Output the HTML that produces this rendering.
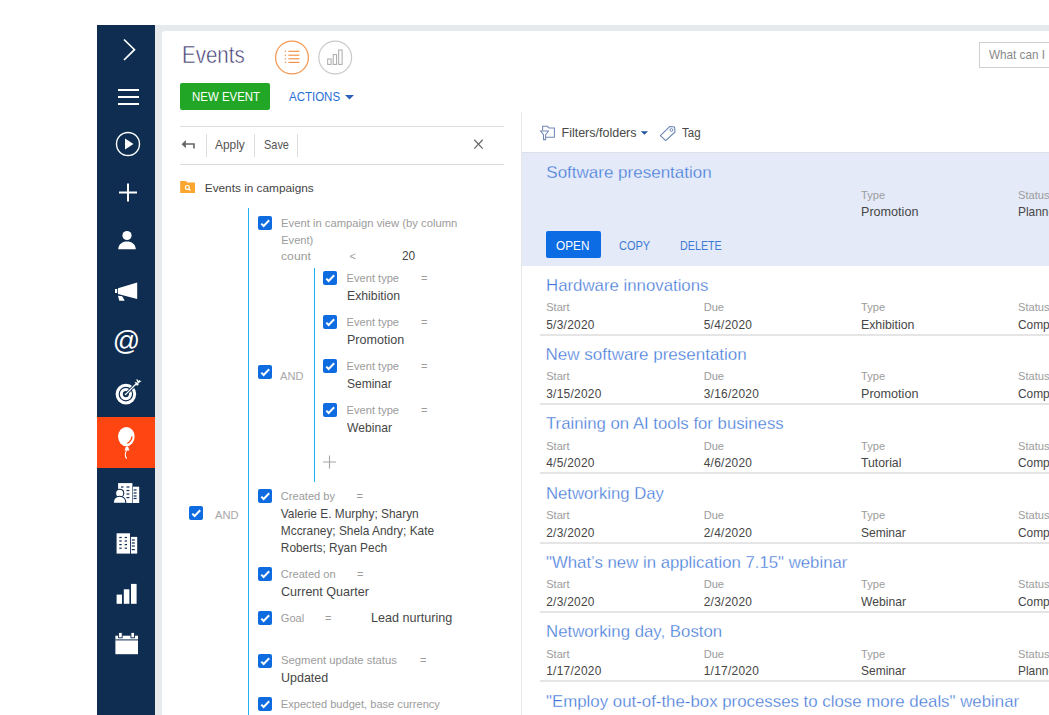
<!DOCTYPE html>
<html><head><meta charset="utf-8"><title>Events</title>
<style>
html,body{margin:0;padding:0;width:1049px;height:715px;overflow:hidden;background:#fff;position:relative}
.t{position:absolute;white-space:nowrap;font-family:"Liberation Sans", sans-serif}
</style></head><body>
<div style="position:absolute;left:97px;top:25px;width:58px;height:690px;background:#0F2D50"></div><div style="position:absolute;left:97px;top:417px;width:58px;height:51px;background:#FF4512"></div><div style="position:absolute;left:155px;top:25px;width:894px;height:690px;background:#E7EAEC"></div><div style="position:absolute;left:162px;top:31px;width:887px;height:684px;background:#fff;border-top-left-radius:3px"></div><svg style="position:absolute;left:0;top:0" width="1049" height="715"><polyline points="124,39.5 134.5,49.7 124,60" fill="none" stroke="#fff" stroke-width="1.7"/><rect x="118" y="89" width="21" height="2" fill="#fff"/><rect x="118" y="96" width="21" height="2" fill="#fff"/><rect x="118" y="103" width="21" height="2" fill="#fff"/><circle cx="128" cy="144" r="11.5" fill="none" stroke="#fff" stroke-width="1.4"/><polygon points="125,138.5 125,149.5 133.5,144" fill="#fff"/><rect x="119" y="191.5" width="18" height="2" fill="#fff"/><rect x="127" y="183.5" width="2" height="18" fill="#fff"/><circle cx="127" cy="235.5" r="4.6" fill="#fff"/><path d="M118.2,249.3 C118.5,244 122.5,241.5 127,241.5 C131.5,241.5 135.5,244 135.8,249.3 Z" fill="#fff"/><path d="M118,288.2 L137.2,282.4 L137.2,299 L118,293.9 Z" fill="#fff"/><path d="M115,289 L117.2,289 L117.2,293 L115,293 Z" fill="#fff"/><path d="M118,295.8 L122.2,296.3 L124.7,300.8 L119.3,300.8 Z" fill="#fff"/><text x="126.5" y="350" font-family="Liberation Sans" font-size="27" fill="#fff" text-anchor="middle">@</text><circle cx="125.9" cy="394.1" r="8.8" fill="none" stroke="#fff" stroke-width="3"/><circle cx="125.9" cy="394.1" r="4.6" fill="none" stroke="#fff" stroke-width="3"/><circle cx="125.9" cy="394.1" r="1.2" fill="#fff"/><line x1="125.9" y1="394.1" x2="137" y2="383" stroke="#0F2D50" stroke-width="3"/><line x1="125.9" y1="394.1" x2="137.5" y2="382.5" stroke="#fff" stroke-width="1.3"/><path d="M134.5,381.5 L137,386 L139,384 Z M136,379.5 L140.5,381.5 L138.5,383.5 Z" fill="#fff"/><path d="M137,379.3 L138,382 M139,380.5 L141.2,381.6" stroke="#fff" stroke-width="0.9"/><ellipse cx="126.35" cy="436.6" rx="8.3" ry="9.6" fill="#fff"/><path d="M124.4,450.6 L125.8,447.2 L127,446 L128.2,447.2 L129.6,450.6 Z" fill="#fff"/><path d="M126.8,450.5 C125,452.5 124.2,454.5 126.6,458.8" fill="none" stroke="#fff" stroke-width="1.1"/><path d="M132,436.5 C131.6,439.8 130,442 127.4,443.3" fill="none" stroke="#FF4512" stroke-width="1.4"/><rect x="118.1" y="483.1" width="14.3" height="19.9" fill="#fff"/><rect x="133" y="486.7" width="6.2" height="16.3" fill="#fff"/><rect x="121" y="486.4" width="2.5" height="1.2" fill="#0F2D50"/><rect x="126.5" y="486.4" width="2.9" height="1.2" fill="#0F2D50"/><rect x="121" y="489.9" width="2.5" height="1.2" fill="#0F2D50"/><rect x="126.5" y="489.9" width="2.9" height="1.2" fill="#0F2D50"/><rect x="121" y="493.4" width="2.5" height="1.2" fill="#0F2D50"/><rect x="126.5" y="493.4" width="2.9" height="1.2" fill="#0F2D50"/><rect x="121" y="497.0" width="2.5" height="1.2" fill="#0F2D50"/><rect x="126.5" y="497.0" width="2.9" height="1.2" fill="#0F2D50"/><rect x="133.6" y="489.4" width="3" height="1.2" fill="#0F2D50"/><rect x="133.6" y="492.4" width="3" height="1.2" fill="#0F2D50"/><rect x="133.6" y="495.4" width="3" height="1.2" fill="#0F2D50"/><rect x="133.6" y="497.9" width="3" height="1.2" fill="#0F2D50"/><circle cx="119.7" cy="493.3" r="4.1" fill="#fff" stroke="#0F2D50" stroke-width="1.1"/><path d="M113.2,503.4 C113.2,499 116,496.3 119.6,496.3 C123.2,496.3 126,499 126,503.4 Z" fill="#fff" stroke="#0F2D50" stroke-width="1.1"/><rect x="116.6" y="533.3" width="13.4" height="20.3" fill="#fff"/><rect x="130.9" y="536.9" width="6.3" height="16.7" fill="#fff"/><rect x="119.3" y="536.9" width="2.4" height="1.2" fill="#0F2D50"/><rect x="124.7" y="536.9" width="2.3" height="1.2" fill="#0F2D50"/><rect x="119.3" y="540.4" width="2.4" height="1.2" fill="#0F2D50"/><rect x="124.7" y="540.4" width="2.3" height="1.2" fill="#0F2D50"/><rect x="119.3" y="544.0" width="2.4" height="1.2" fill="#0F2D50"/><rect x="124.7" y="544.0" width="2.3" height="1.2" fill="#0F2D50"/><rect x="119.3" y="547.6" width="2.4" height="1.2" fill="#0F2D50"/><rect x="124.7" y="547.6" width="2.3" height="1.2" fill="#0F2D50"/><rect x="131.8" y="539.4" width="3" height="1.2" fill="#0F2D50"/><rect x="131.8" y="542.4" width="3" height="1.2" fill="#0F2D50"/><rect x="131.8" y="545.4" width="3" height="1.2" fill="#0F2D50"/><rect x="131.8" y="549.0" width="3" height="1.2" fill="#0F2D50"/><rect x="116.6" y="594.6" width="5.4" height="9.2" fill="#fff"/><rect x="123.8" y="589.3" width="5.6" height="14.5" fill="#fff"/><rect x="131" y="583.9" width="5.6" height="19.9" fill="#fff"/><rect x="115.4" y="635.7" width="22.6" height="18.5" fill="#fff"/><rect x="115.4" y="639.4" width="22.6" height="1" fill="#0F2D50"/><rect x="118.6" y="632.4" width="3.6" height="5.4" fill="#fff" stroke="#0F2D50" stroke-width="0.9"/><rect x="130.9" y="632.4" width="3.6" height="5.4" fill="#fff" stroke="#0F2D50" stroke-width="0.9"/><circle cx="292" cy="57.5" r="16.4" fill="none" stroke="#F39A55" stroke-width="1.3"/><rect x="284.8" y="50.75" width="1.3" height="1.1" fill="#F08A3C"/><rect x="288.4" y="50.75" width="11" height="1.1" fill="#F08A3C"/><rect x="284.8" y="54.650000000000006" width="1.3" height="1.1" fill="#F08A3C"/><rect x="288.4" y="54.650000000000006" width="11" height="1.1" fill="#F08A3C"/><rect x="284.8" y="58.25" width="1.3" height="1.1" fill="#F08A3C"/><rect x="288.4" y="58.25" width="11" height="1.1" fill="#F08A3C"/><rect x="284.8" y="61.85" width="1.3" height="1.1" fill="#F08A3C"/><rect x="288.4" y="61.85" width="11" height="1.1" fill="#F08A3C"/><circle cx="335.2" cy="57.5" r="16.4" fill="none" stroke="#C9C9C9" stroke-width="1.2"/><rect x="327.7" y="59" width="3.4" height="5.4" fill="none" stroke="#A8A8A8" stroke-width="1"/><rect x="333.2" y="54.6" width="3.4" height="9.8" fill="none" stroke="#A8A8A8" stroke-width="1"/><rect x="338.7" y="50" width="3.4" height="14.4" fill="none" stroke="#A8A8A8" stroke-width="1"/></svg><div class="t" style="left:181.8px;top:40.86px;font-size:23.2px;line-height:29px;color:#3F3C70;transform:scaleX(0.885);transform-origin:0 0;-webkit-text-stroke:0.5px #fff">Events</div>
<div style="position:absolute;left:180px;top:83px;width:90px;height:27px;background:#22A626;border-radius:2px"></div><div class="t" style="left:191.6px;top:88.86px;font-size:13.1px;line-height:16px;color:#fff;transform:scaleX(0.874);transform-origin:0 0;">NEW EVENT</div>
<div class="t" style="left:289px;top:88.86px;font-size:13.1px;line-height:16px;color:#1F6ED6;transform:scaleX(0.877);transform-origin:0 0;">ACTIONS</div>
<svg style="position:absolute;left:0;top:0" width="1049" height="715"><polygon points="345,95 354,95 349.5,99.5" fill="#2B62B8"/></svg><div style="position:absolute;left:979px;top:42px;width:90px;height:24px;border:1px solid #CFCFCF;background:#fff"></div><div class="t" style="left:989px;top:46.89px;font-size:13px;line-height:16px;color:#8A8A8A;transform:scaleX(0.9);transform-origin:0 0;">What can I</div>
<div style="position:absolute;left:180px;top:126px;width:324px;height:1px;background:#DCDCDC"></div><div style="position:absolute;left:180px;top:163.5px;width:324px;height:1px;background:#DCDCDC"></div><div style="position:absolute;left:206px;top:134px;width:1px;height:23px;background:#DEDEDE"></div><div style="position:absolute;left:254px;top:134px;width:1px;height:23px;background:#DEDEDE"></div><div style="position:absolute;left:297px;top:134px;width:1px;height:23px;background:#DEDEDE"></div><div class="t" style="left:215px;top:137.67px;font-size:11.9px;line-height:15px;color:#555;">Apply</div>
<div class="t" style="left:263.7px;top:137.67px;font-size:11.9px;line-height:15px;color:#555;transform:scaleX(0.92);transform-origin:0 0;">Save</div>
<svg style="position:absolute;left:0;top:0" width="1049" height="715"><path d="M185,144 L194,144 L194,148.4" fill="none" stroke="#666" stroke-width="1.6"/><polygon points="181.6,144.2 185.9,140.1 185.9,148.3" fill="#666"/><path d="M474.3,139.7 L482.7,148.6 M482.7,139.7 L474.3,148.6" stroke="#6A6A6A" stroke-width="1.25"/><path d="M180.2,181 L185.8,181 L187.3,182.6 L195,182.6 L195,193 L180.2,193 Z" fill="#FCA632"/><circle cx="187.3" cy="187.4" r="1.9" fill="none" stroke="#fff" stroke-width="1.2"/><line x1="188.7" y1="188.8" x2="190.4" y2="190.5" stroke="#fff" stroke-width="1.2"/></svg><div class="t" style="left:204.8px;top:180.61px;font-size:11.8px;line-height:15px;color:#444;">Events in campaigns</div>
<div style="position:absolute;left:248px;top:208px;width:1px;height:507px;background:#1FB0F0"></div><div style="position:absolute;left:314px;top:268px;width:1px;height:214px;background:#1FB0F0"></div><div style="position:absolute;left:258px;top:216px;width:14px;height:14px;background:#0E6BE0;border-radius:2px"><svg width="14" height="14" style="position:absolute;left:0;top:0"><polyline points="3.3,7.6 5.6,10 11.2,4.3" fill="none" stroke="#fff" stroke-width="2"/></svg></div><div class="t" style="left:281.2px;top:216.05px;font-size:11.1px;line-height:14px;color:#9C9C9C;transform:scaleX(1.014);transform-origin:0 0;">Event in campaign view (by column</div>
<div class="t" style="left:281.2px;top:232.55px;font-size:11.1px;line-height:14px;color:#9C9C9C;">Event)</div>
<div class="t" style="left:281.2px;top:249.05px;font-size:11.1px;line-height:14px;color:#9C9C9C;transform:scaleX(1.1);transform-origin:0 0;">count</div>
<div class="t" style="left:349.5px;top:249.05px;font-size:11.1px;line-height:14px;color:#9C9C9C;">&lt;</div>
<div class="t" style="left:402px;top:248.97px;font-size:11.9px;line-height:15px;color:#464646;">20</div>
<div style="position:absolute;left:323px;top:271px;width:14px;height:14px;background:#0E6BE0;border-radius:2px"><svg width="14" height="14" style="position:absolute;left:0;top:0"><polyline points="3.3,7.6 5.6,10 11.2,4.3" fill="none" stroke="#fff" stroke-width="2"/></svg></div><div class="t" style="left:346.6px;top:270.65px;font-size:11.1px;line-height:14px;color:#9C9C9C;">Event type</div>
<div class="t" style="left:421px;top:270.65px;font-size:11.1px;line-height:14px;color:#9C9C9C;">=</div>
<div class="t" style="left:346.6px;top:289.37px;font-size:11.9px;line-height:15px;color:#464646;transform:scaleX(1.03);transform-origin:0 0;">Exhibition</div>
<div style="position:absolute;left:323px;top:315px;width:14px;height:14px;background:#0E6BE0;border-radius:2px"><svg width="14" height="14" style="position:absolute;left:0;top:0"><polyline points="3.3,7.6 5.6,10 11.2,4.3" fill="none" stroke="#fff" stroke-width="2"/></svg></div><div class="t" style="left:346.6px;top:314.65px;font-size:11.1px;line-height:14px;color:#9C9C9C;">Event type</div>
<div class="t" style="left:421px;top:314.65px;font-size:11.1px;line-height:14px;color:#9C9C9C;">=</div>
<div class="t" style="left:346.6px;top:333.37px;font-size:11.9px;line-height:15px;color:#464646;transform:scaleX(1.055);transform-origin:0 0;">Promotion</div>
<div style="position:absolute;left:323px;top:359px;width:14px;height:14px;background:#0E6BE0;border-radius:2px"><svg width="14" height="14" style="position:absolute;left:0;top:0"><polyline points="3.3,7.6 5.6,10 11.2,4.3" fill="none" stroke="#fff" stroke-width="2"/></svg></div><div class="t" style="left:346.6px;top:358.65px;font-size:11.1px;line-height:14px;color:#9C9C9C;">Event type</div>
<div class="t" style="left:421px;top:358.65px;font-size:11.1px;line-height:14px;color:#9C9C9C;">=</div>
<div class="t" style="left:346.6px;top:377.37px;font-size:11.9px;line-height:15px;color:#464646;transform:scaleX(1.01);transform-origin:0 0;">Seminar</div>
<div style="position:absolute;left:323px;top:403px;width:14px;height:14px;background:#0E6BE0;border-radius:2px"><svg width="14" height="14" style="position:absolute;left:0;top:0"><polyline points="3.3,7.6 5.6,10 11.2,4.3" fill="none" stroke="#fff" stroke-width="2"/></svg></div><div class="t" style="left:346.6px;top:402.65px;font-size:11.1px;line-height:14px;color:#9C9C9C;">Event type</div>
<div class="t" style="left:421px;top:402.65px;font-size:11.1px;line-height:14px;color:#9C9C9C;">=</div>
<div class="t" style="left:346.6px;top:421.37px;font-size:11.9px;line-height:15px;color:#464646;transform:scaleX(1.02);transform-origin:0 0;">Webinar</div>
<div style="position:absolute;left:258px;top:365px;width:14px;height:14px;background:#0E6BE0;border-radius:2px"><svg width="14" height="14" style="position:absolute;left:0;top:0"><polyline points="3.3,7.6 5.6,10 11.2,4.3" fill="none" stroke="#fff" stroke-width="2"/></svg></div><div class="t" style="left:280px;top:368.65px;font-size:11.1px;line-height:14px;color:#A8A8A8;">AND</div>
<svg style="position:absolute;left:0;top:0" width="1049" height="715"><path d="M323,462 L336,462 M329.5,455.5 L329.5,468.5" stroke="#A5A5A5" stroke-width="1.1"/></svg><div style="position:absolute;left:189px;top:506px;width:14px;height:14px;background:#0E6BE0;border-radius:2px"><svg width="14" height="14" style="position:absolute;left:0;top:0"><polyline points="3.3,7.6 5.6,10 11.2,4.3" fill="none" stroke="#fff" stroke-width="2"/></svg></div><div class="t" style="left:215px;top:508.15px;font-size:11.1px;line-height:14px;color:#A8A8A8;">AND</div>
<div style="position:absolute;left:258px;top:489px;width:14px;height:14px;background:#0E6BE0;border-radius:2px"><svg width="14" height="14" style="position:absolute;left:0;top:0"><polyline points="3.3,7.6 5.6,10 11.2,4.3" fill="none" stroke="#fff" stroke-width="2"/></svg></div><div class="t" style="left:280.8px;top:488.85px;font-size:11.1px;line-height:14px;color:#9C9C9C;">Created by</div>
<div class="t" style="left:356.6px;top:488.85px;font-size:11.1px;line-height:14px;color:#9C9C9C;">=</div>
<div class="t" style="left:280.8px;top:506.87px;font-size:11.9px;line-height:15px;color:#464646;">Valerie E. Murphy; Sharyn</div>
<div class="t" style="left:280.8px;top:524.17px;font-size:11.9px;line-height:15px;color:#464646;">Mccraney; Shela Andry; Kate</div>
<div class="t" style="left:280.8px;top:541.37px;font-size:11.9px;line-height:15px;color:#464646;">Roberts; Ryan Pech</div>
<div style="position:absolute;left:258px;top:567px;width:14px;height:14px;background:#0E6BE0;border-radius:2px"><svg width="14" height="14" style="position:absolute;left:0;top:0"><polyline points="3.3,7.6 5.6,10 11.2,4.3" fill="none" stroke="#fff" stroke-width="2"/></svg></div><div class="t" style="left:280.8px;top:567.15px;font-size:11.1px;line-height:14px;color:#9C9C9C;">Created on</div>
<div class="t" style="left:357px;top:567.15px;font-size:11.1px;line-height:14px;color:#9C9C9C;">=</div>
<div class="t" style="left:280.5px;top:584.87px;font-size:11.9px;line-height:15px;color:#464646;transform:scaleX(1.055);transform-origin:0 0;">Current Quarter</div>
<div style="position:absolute;left:258px;top:611px;width:14px;height:14px;background:#0E6BE0;border-radius:2px"><svg width="14" height="14" style="position:absolute;left:0;top:0"><polyline points="3.3,7.6 5.6,10 11.2,4.3" fill="none" stroke="#fff" stroke-width="2"/></svg></div><div class="t" style="left:280.8px;top:610.85px;font-size:11.1px;line-height:14px;color:#9C9C9C;">Goal</div>
<div class="t" style="left:325px;top:610.85px;font-size:11.1px;line-height:14px;color:#9C9C9C;">=</div>
<div class="t" style="left:370.7px;top:611.07px;font-size:11.9px;line-height:15px;color:#464646;transform:scaleX(1.06);transform-origin:0 0;">Lead nurturing</div>
<div style="position:absolute;left:258px;top:654px;width:14px;height:14px;background:#0E6BE0;border-radius:2px"><svg width="14" height="14" style="position:absolute;left:0;top:0"><polyline points="3.3,7.6 5.6,10 11.2,4.3" fill="none" stroke="#fff" stroke-width="2"/></svg></div><div class="t" style="left:280.8px;top:653.15px;font-size:11.1px;line-height:14px;color:#9C9C9C;transform:scaleX(1.015);transform-origin:0 0;">Segment update status</div>
<div class="t" style="left:420px;top:653.15px;font-size:11.1px;line-height:14px;color:#9C9C9C;">=</div>
<div class="t" style="left:280.5px;top:670.67px;font-size:11.9px;line-height:15px;color:#464646;transform:scaleX(1.05);transform-origin:0 0;">Updated</div>
<div style="position:absolute;left:258px;top:697px;width:14px;height:14px;background:#0E6BE0;border-radius:2px"><svg width="14" height="14" style="position:absolute;left:0;top:0"><polyline points="3.3,7.6 5.6,10 11.2,4.3" fill="none" stroke="#fff" stroke-width="2"/></svg></div><div class="t" style="left:280.8px;top:696.85px;font-size:11.1px;line-height:14px;color:#9C9C9C;">Expected budget, base currency</div>
<div style="position:absolute;left:521px;top:112px;width:1px;height:603px;background:#E6E6E6"></div><div style="position:absolute;left:522px;top:152px;width:527px;height:113px;background:#E4EAF8;border-top:1px solid #DCE0E8"></div><svg style="position:absolute;left:0;top:0" width="1049" height="715"><path d="M542.6,130.6 L542.6,126.3 L547.4,126.3 L548.9,127.9 L554.4,127.9 L554.4,137.2 L545.8,137.2" fill="none" stroke="#7189B5" stroke-width="1.05"/><path d="M540.6,131 L548.4,131 L545.6,134.8 L545.6,139.6 L543.5,139.6 L543.5,134.8 Z" fill="#fff" stroke="#7189B5" stroke-width="1.05"/><polygon points="640.8,131.3 648,131.3 644.4,134.8" fill="#24529C"/><path d="M660.4,135.7 L665.7,140.6 L675,132 L674.5,126.9 L669.7,126.6 Z" fill="none" stroke="#6782B5" stroke-width="1.05" stroke-linejoin="round"/><circle cx="671.4" cy="130" r="1.4" fill="none" stroke="#6782B5" stroke-width="0.9"/></svg><div class="t" style="left:561.5px;top:125.07px;font-size:12.5px;line-height:16px;color:#484848;">Filters/folders</div>
<div class="t" style="left:682px;top:125.07px;font-size:12.5px;line-height:16px;color:#484848;transform:scaleX(0.92);transform-origin:0 0;">Tag</div>
<div class="t" style="left:546.3px;top:162.21px;font-size:17px;line-height:21px;color:#3F77D8;-webkit-text-stroke:0.3px #E4EAF8">Software presentation</div>
<div class="t" style="left:861px;top:188.15px;font-size:11.1px;line-height:14px;color:#9C9C9C;">Type</div>
<div class="t" style="left:1018px;top:188.15px;font-size:11.1px;line-height:14px;color:#9C9C9C;">Status</div>
<div class="t" style="left:861px;top:205.17px;font-size:11.9px;line-height:15px;color:#464646;transform:scaleX(1.06);transform-origin:0 0;">Promotion</div>
<div class="t" style="left:1018px;top:205.17px;font-size:11.9px;line-height:15px;color:#464646;">Planned</div>
<div style="position:absolute;left:546px;top:231px;width:55px;height:27px;background:#0B6CE3;border-radius:2px"></div><div class="t" style="left:556.2px;top:237.86px;font-size:13.1px;line-height:16px;color:#fff;transform:scaleX(0.9);transform-origin:0 0;">OPEN</div>
<div class="t" style="left:619px;top:237.86px;font-size:13.1px;line-height:16px;color:#3D7AD6;transform:scaleX(0.84);transform-origin:0 0;">COPY</div>
<div class="t" style="left:680.1px;top:237.86px;font-size:13.1px;line-height:16px;color:#3D7AD6;transform:scaleX(0.82);transform-origin:0 0;">DELETE</div>
<div class="t" style="left:545.5px;top:274.61px;font-size:17px;line-height:21px;color:#3F77D8;transform:scaleX(0.988);transform-origin:0 0;-webkit-text-stroke:0.3px #fff">Hardware innovations</div>
<div class="t" style="left:546.2px;top:300.15px;font-size:11.1px;line-height:14px;color:#9C9C9C;">Start</div>
<div class="t" style="left:703.7px;top:300.15px;font-size:11.1px;line-height:14px;color:#9C9C9C;">Due</div>
<div class="t" style="left:861px;top:300.15px;font-size:11.1px;line-height:14px;color:#9C9C9C;">Type</div>
<div class="t" style="left:1018px;top:300.15px;font-size:11.1px;line-height:14px;color:#9C9C9C;">Status</div>
<div class="t" style="left:546.2px;top:317.77px;font-size:11.9px;line-height:15px;color:#464646;letter-spacing:0.28px">5/3/2020</div>
<div class="t" style="left:703.7px;top:317.77px;font-size:11.9px;line-height:15px;color:#464646;letter-spacing:0.28px">5/4/2020</div>
<div class="t" style="left:861px;top:317.77px;font-size:11.9px;line-height:15px;color:#464646;transform:scaleX(1.035);transform-origin:0 0;">Exhibition</div>
<div class="t" style="left:1018px;top:317.77px;font-size:11.9px;line-height:15px;color:#464646;">Completed</div>
<div style="position:absolute;left:540px;top:334px;width:509px;height:2px;background:#E5E5E5"></div><div class="t" style="left:545.5px;top:343.91px;font-size:17px;line-height:21px;color:#3F77D8;-webkit-text-stroke:0.3px #fff">New software presentation</div>
<div class="t" style="left:546.2px;top:369.45px;font-size:11.1px;line-height:14px;color:#9C9C9C;">Start</div>
<div class="t" style="left:703.7px;top:369.45px;font-size:11.1px;line-height:14px;color:#9C9C9C;">Due</div>
<div class="t" style="left:861px;top:369.45px;font-size:11.1px;line-height:14px;color:#9C9C9C;">Type</div>
<div class="t" style="left:1018px;top:369.45px;font-size:11.1px;line-height:14px;color:#9C9C9C;">Status</div>
<div class="t" style="left:546.2px;top:387.07px;font-size:11.9px;line-height:15px;color:#464646;letter-spacing:0.28px">3/15/2020</div>
<div class="t" style="left:703.7px;top:387.07px;font-size:11.9px;line-height:15px;color:#464646;letter-spacing:0.28px">3/16/2020</div>
<div class="t" style="left:861px;top:387.07px;font-size:11.9px;line-height:15px;color:#464646;transform:scaleX(1.06);transform-origin:0 0;">Promotion</div>
<div class="t" style="left:1018px;top:387.07px;font-size:11.9px;line-height:15px;color:#464646;">Completed</div>
<div style="position:absolute;left:540px;top:403px;width:509px;height:2px;background:#E5E5E5"></div><div class="t" style="left:545.5px;top:413.21px;font-size:17px;line-height:21px;color:#3F77D8;transform:scaleX(0.985);transform-origin:0 0;-webkit-text-stroke:0.3px #fff">Training on AI tools for business</div>
<div class="t" style="left:546.2px;top:438.75px;font-size:11.1px;line-height:14px;color:#9C9C9C;">Start</div>
<div class="t" style="left:703.7px;top:438.75px;font-size:11.1px;line-height:14px;color:#9C9C9C;">Due</div>
<div class="t" style="left:861px;top:438.75px;font-size:11.1px;line-height:14px;color:#9C9C9C;">Type</div>
<div class="t" style="left:1018px;top:438.75px;font-size:11.1px;line-height:14px;color:#9C9C9C;">Status</div>
<div class="t" style="left:546.2px;top:456.37px;font-size:11.9px;line-height:15px;color:#464646;letter-spacing:0.28px">4/5/2020</div>
<div class="t" style="left:703.7px;top:456.37px;font-size:11.9px;line-height:15px;color:#464646;letter-spacing:0.28px">4/6/2020</div>
<div class="t" style="left:861px;top:456.37px;font-size:11.9px;line-height:15px;color:#464646;transform:scaleX(1.03);transform-origin:0 0;">Tutorial</div>
<div class="t" style="left:1018px;top:456.37px;font-size:11.9px;line-height:15px;color:#464646;">Completed</div>
<div style="position:absolute;left:540px;top:472px;width:509px;height:2px;background:#E5E5E5"></div><div class="t" style="left:545.5px;top:482.51px;font-size:17px;line-height:21px;color:#3F77D8;transform:scaleX(0.983);transform-origin:0 0;-webkit-text-stroke:0.3px #fff">Networking Day</div>
<div class="t" style="left:546.2px;top:508.05px;font-size:11.1px;line-height:14px;color:#9C9C9C;">Start</div>
<div class="t" style="left:703.7px;top:508.05px;font-size:11.1px;line-height:14px;color:#9C9C9C;">Due</div>
<div class="t" style="left:861px;top:508.05px;font-size:11.1px;line-height:14px;color:#9C9C9C;">Type</div>
<div class="t" style="left:1018px;top:508.05px;font-size:11.1px;line-height:14px;color:#9C9C9C;">Status</div>
<div class="t" style="left:546.2px;top:525.67px;font-size:11.9px;line-height:15px;color:#464646;letter-spacing:0.28px">2/3/2020</div>
<div class="t" style="left:703.7px;top:525.67px;font-size:11.9px;line-height:15px;color:#464646;letter-spacing:0.28px">2/4/2020</div>
<div class="t" style="left:861px;top:525.67px;font-size:11.9px;line-height:15px;color:#464646;transform:scaleX(1.01);transform-origin:0 0;">Seminar</div>
<div class="t" style="left:1018px;top:525.67px;font-size:11.9px;line-height:15px;color:#464646;">Completed</div>
<div style="position:absolute;left:540px;top:542px;width:509px;height:2px;background:#E5E5E5"></div><div class="t" style="left:545.5px;top:551.81px;font-size:17px;line-height:21px;color:#3F77D8;transform:scaleX(0.986);transform-origin:0 0;-webkit-text-stroke:0.3px #fff">"What’s new in application 7.15" webinar</div>
<div class="t" style="left:546.2px;top:577.35px;font-size:11.1px;line-height:14px;color:#9C9C9C;">Start</div>
<div class="t" style="left:703.7px;top:577.35px;font-size:11.1px;line-height:14px;color:#9C9C9C;">Due</div>
<div class="t" style="left:861px;top:577.35px;font-size:11.1px;line-height:14px;color:#9C9C9C;">Type</div>
<div class="t" style="left:1018px;top:577.35px;font-size:11.1px;line-height:14px;color:#9C9C9C;">Status</div>
<div class="t" style="left:546.2px;top:594.97px;font-size:11.9px;line-height:15px;color:#464646;letter-spacing:0.28px">2/3/2020</div>
<div class="t" style="left:703.7px;top:594.97px;font-size:11.9px;line-height:15px;color:#464646;letter-spacing:0.28px">2/3/2020</div>
<div class="t" style="left:861px;top:594.97px;font-size:11.9px;line-height:15px;color:#464646;transform:scaleX(1.02);transform-origin:0 0;">Webinar</div>
<div class="t" style="left:1018px;top:594.97px;font-size:11.9px;line-height:15px;color:#464646;">Completed</div>
<div style="position:absolute;left:540px;top:611px;width:509px;height:2px;background:#E5E5E5"></div><div class="t" style="left:545.5px;top:621.11px;font-size:17px;line-height:21px;color:#3F77D8;transform:scaleX(0.988);transform-origin:0 0;-webkit-text-stroke:0.3px #fff">Networking day, Boston</div>
<div class="t" style="left:546.2px;top:646.65px;font-size:11.1px;line-height:14px;color:#9C9C9C;">Start</div>
<div class="t" style="left:703.7px;top:646.65px;font-size:11.1px;line-height:14px;color:#9C9C9C;">Due</div>
<div class="t" style="left:861px;top:646.65px;font-size:11.1px;line-height:14px;color:#9C9C9C;">Type</div>
<div class="t" style="left:1018px;top:646.65px;font-size:11.1px;line-height:14px;color:#9C9C9C;">Status</div>
<div class="t" style="left:546.2px;top:664.27px;font-size:11.9px;line-height:15px;color:#464646;letter-spacing:0.28px">1/17/2020</div>
<div class="t" style="left:703.7px;top:664.27px;font-size:11.9px;line-height:15px;color:#464646;letter-spacing:0.28px">1/17/2020</div>
<div class="t" style="left:861px;top:664.27px;font-size:11.9px;line-height:15px;color:#464646;transform:scaleX(1.01);transform-origin:0 0;">Seminar</div>
<div class="t" style="left:1018px;top:664.27px;font-size:11.9px;line-height:15px;color:#464646;">Planned</div>
<div style="position:absolute;left:540px;top:680px;width:509px;height:2px;background:#E5E5E5"></div><div class="t" style="left:545.5px;top:690.91px;font-size:17px;line-height:21px;color:#3F77D8;transform:scaleX(0.99);transform-origin:0 0;-webkit-text-stroke:0.3px #fff">"Employ out-of-the-box processes to close more deals" webinar</div>

</body></html>
